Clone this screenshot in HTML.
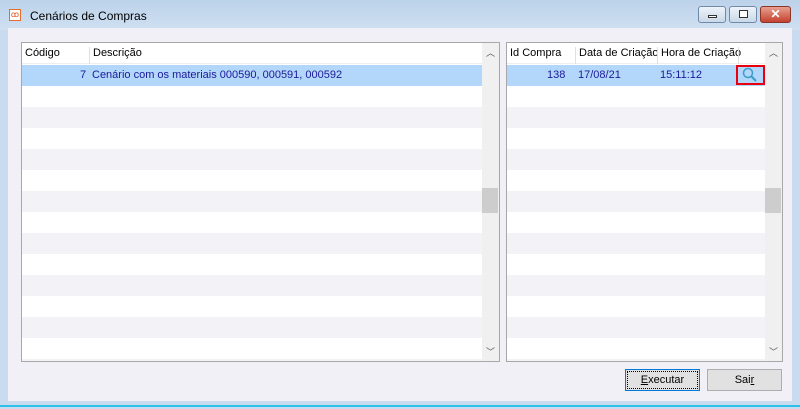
<!DOCTYPE html><html><head><style>
*{margin:0;padding:0;box-sizing:border-box}
body{width:800px;height:409px;background:#c9dbee;font-family:"Liberation Sans",sans-serif;font-size:11px;position:relative;overflow:hidden}
.tb{position:absolute;left:0;top:0;width:800px;height:30px;background:linear-gradient(#bcd2ea,#cfe0f1)}
.title{position:absolute;left:30px;top:9px;font-size:12px;color:#000}
.ico{position:absolute;left:9px;top:9px;width:12px;height:12px;background:#fff;border:1px solid #e07030;color:#e05020;font-size:8px;line-height:10px;text-align:center}
.wb{position:absolute;top:6px;height:17px;border:1px solid #6f8aa8;border-radius:3px;background:linear-gradient(#eef3f9,#cad8e8)}
.cl{background:linear-gradient(#e8a090,#c5412e);border-color:#8a3528}
.body{position:absolute;left:8px;top:28px;width:784px;height:373px;background:#f0f0f6}
.bline{position:absolute;left:0;top:405px;width:800px;height:2px;background:#2ec0e8}
.panel{position:absolute;top:42px;height:320px;border:1px solid #a8a8a8;background:#fff;overflow:hidden}
.hdr{position:absolute;left:0;top:0;height:21px;right:17px;background:#fff;border-bottom:1px solid #eee}
.hdr span{position:absolute;top:4px;border-left:1px solid #e0e0e0;padding-left:3px;height:17px}
.row{position:absolute;left:0;right:17px;height:21px}
.sb{position:absolute;right:0;top:0;width:17px;height:100%;background:#f0f0f0}
.th{position:absolute;left:0;width:16px;top:145px;height:25px;background:#cdcdcd}
.sel{background:#b3d7fa;color:#1a1a9a}
.sel span{position:absolute;top:4px}
.btn{position:absolute;top:369px;height:22px;border:1px solid #adadad;background:#e1e1e1;text-align:center;line-height:20px;font-size:11px}
</style></head><body>
<div class="tb"></div>
<div class="ico">ꝏ</div>
<div class="title">Cenários de Compras</div>
<div class="wb" style="left:698px;width:28px"><div style="position:absolute;left:9px;top:8px;width:9px;height:3px;background:#fff;border:1px solid #333"></div></div>
<div class="wb" style="left:729px;width:28px"><div style="position:absolute;left:9px;top:3px;width:9px;height:8px;background:#fff;border:1px solid #333"></div></div>
<div class="wb cl" style="left:760px;width:31px;color:#fff;font-weight:bold;text-align:center;line-height:14px;font-size:12px">✕</div>
<div class="body"></div>
<div class="bline"></div>

<div class="panel" style="left:21px;width:479px">
<div id="l"></div>
<div class="hdr"><span style="left:0;border:0">Código</span><span style="left:67px">Descrição</span></div>
<div class="row sel" style="top:22px"><span style="left:58px">7</span><span style="left:70px">Cenário com os materiais 000590, 000591, 000592</span></div>
<div class="sb"><div style="position:absolute;top:3px;left:4px;font-size:9px;color:#555">︿</div><div class="th"></div><div style="position:absolute;bottom:3px;left:4px;font-size:9px;color:#555">﹀</div></div>
</div>

<div class="panel" style="left:506px;width:277px">
<div id="r"></div>
<div class="hdr"><span style="left:0;border:0">Id Compra</span><span style="left:68px">Data de Criação</span><span style="left:150px">Hora de Criação</span><span style="left:231px;width:28px"></span></div>
<div class="row sel" style="top:22px"><span style="left:40px">138</span><span style="left:71px">17/08/21</span><span style="left:153px">15:11:12</span>
<div style="position:absolute;left:229px;top:0;width:29px;height:20px;border:2px solid #e8000f;background:#b3d7fa"><svg width="25" height="16" viewBox="0 0 25 16"><circle cx="10" cy="6" r="4.5" fill="none" stroke="#3a9ec8" stroke-width="1.5"/><path d="M13.5 9.5L18 14" stroke="#3a9ec8" stroke-width="2"/></svg></div></div>
<div class="sb"><div style="position:absolute;top:3px;left:4px;font-size:9px;color:#555">︿</div><div class="th"></div><div style="position:absolute;bottom:3px;left:4px;font-size:9px;color:#555">﹀</div></div>
</div>

<div class="btn" style="left:625px;width:75px;border:1px solid #0078d7;outline:1px dotted #000;outline-offset:-3px"><u>E</u>xecutar</div>
<div class="btn" style="left:707px;width:75px">Sai<u>r</u></div>
<script>
for(const id of['l','r']){let h='';for(let i=0;i<14;i++){h+='<div class="row" style="top:'+(43+i*21)+'px;background:'+(i%2?'#f3f3f7':'#fff')+'"></div>'}document.getElementById(id).innerHTML=h}
</script>
</body></html>
